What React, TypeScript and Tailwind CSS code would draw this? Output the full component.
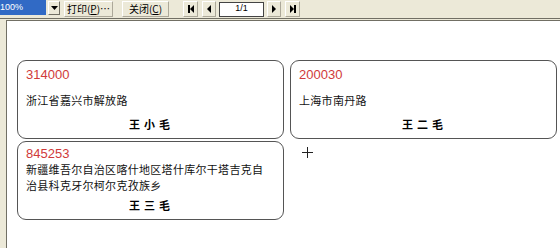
import React from "react";

const cjk = { fontFamily: '"Noto Sans CJK SC", "Liberation Sans", sans-serif' };

function TbButton({ children, w }: { children: React.ReactNode; w: string }) {
  return (
    <div
      className={`${w} h-[16px] flex items-center justify-center whitespace-nowrap bg-[#ece9d8] border border-t-white border-l-white border-r-[#aca899] border-b-[#aca899] text-[10px] leading-[14px] text-black`}
      style={cjk}
    >
      {children}
    </div>
  );
}

function NavBtn({ children, w = "w-[15px]" }: { children: React.ReactNode; w?: string }) {
  return (
    <div className={`${w} h-[16px] flex items-center justify-center bg-[#ece9d8] border border-t-white border-l-white border-r-[#aca899] border-b-[#aca899]`}>
      {children}
    </div>
  );
}

function Card({ code, lines, name }: { code: string; lines: string[]; name: string }) {
  const multi = lines.length > 1;
  return (
    <div className="w-[267px] h-[79px] border border-[#555] rounded-[9px] flex flex-col pl-[8px] pr-[6px]">
      <div
        className={`text-[13px] leading-[15px] text-[#d03a3a] ${multi ? "mt-[4px]" : "mt-[6px]"}`}
        style={{ fontFamily: '"Liberation Sans", sans-serif' }}
      >
        {code}
      </div>
      <div className={`flex-1 flex flex-col ${multi ? "justify-start" : "justify-center"}`}>
        {lines.map((l, i) => (
          <div key={i} className="text-[11px] leading-[16px] tracking-[0.3px] text-[#111]" style={cjk}>
            {l}
          </div>
        ))}
      </div>
      <div className="text-center text-[11px] leading-[14px] tracking-[4px] font-semibold text-black mb-[7px]" style={cjk}>
        {name}
      </div>
    </div>
  );
}

export default function App() {
  return (
    <div className="w-[560px] h-[248px] bg-[#ece9d8] flex flex-col overflow-hidden">
      <div className="h-[19px] flex items-start border-b border-[#716f64]">
        <div className="flex h-[16px]">
          <div className="w-[46px] h-[15px] bg-[#316ac5] text-white text-[9px] leading-[15px]" style={{ fontFamily: '"Liberation Sans", sans-serif' }}>
            100%
          </div>
          <div className="w-[2px]" />
          <div className="w-[12px] h-[14px] mt-[1px] bg-[#ece9d8] border border-t-white border-l-white border-r-[#716f64] border-b-[#716f64] flex items-center justify-center">
            <svg width="7" height="4" viewBox="0 0 7 4"><path d="M0 0h7L3.5 4z" fill="#000" /></svg>
          </div>
        </div>
        <div className="ml-[4px] mt-[1px]">
          <TbButton w="w-[49px]">打印(<u>P</u>)…</TbButton>
        </div>
        <div className="ml-[9px] mt-[1px]">
          <TbButton w="w-[47px]">关闭(<u>C</u>)</TbButton>
        </div>
        <div className="ml-[14px] mt-[1px] flex items-center">
          <NavBtn>
            <svg width="8" height="8" viewBox="0 0 8 8"><rect x="1" y="0" width="2" height="8" fill="#000" /><path d="M7 0v8L3 4z" fill="#000" /></svg>
          </NavBtn>
          <div className="w-[4px]" />
          <NavBtn w="w-[14px]">
            <svg width="8" height="8" viewBox="0 0 8 8"><path d="M6 0v8L2 4z" fill="#000" /></svg>
          </NavBtn>
          <div className="w-[3px]" />
          <div className="w-[45px] h-[15px] bg-white border border-[#444] flex items-center justify-center text-[9px]" style={{ fontFamily: '"Liberation Sans", sans-serif' }}>
            1/1
          </div>
          <div className="w-[3px]" />
          <NavBtn w="w-[14px]">
            <svg width="8" height="8" viewBox="0 0 8 8"><path d="M2 0v8L6 4z" fill="#000" /></svg>
          </NavBtn>
          <div className="w-[4px]" />
          <NavBtn>
            <svg width="8" height="8" viewBox="0 0 8 8"><path d="M1 0v8L5 4z" fill="#000" /><rect x="5" y="0" width="2" height="8" fill="#000" /></svg>
          </NavBtn>
        </div>
      </div>
      <div className="flex-1 flex pt-[1px]">
        <div className="w-[6px]" />
        <div className="flex-1 bg-white border-l border-t border-[#716f64] pl-[10px] pt-[39px]">
          <div className="grid grid-cols-[267px_267px] gap-x-[6px] gap-y-[2px]">
            <Card code="314000" lines={["浙江省嘉兴市解放路"]} name="王小毛" />
            <Card code="200030" lines={["上海市南丹路"]} name="王二毛" />
            <Card
              code="845253"
              lines={["新疆维吾尔自治区喀什地区塔什库尔干塔吉克自", "治县科克牙尔柯尔克孜族乡"]}
              name="王三毛"
            />
            <div className="pl-[12px] pt-[6px]">
              <svg width="11" height="11" viewBox="0 0 11 11"><path d="M5.5 0v11M0 5.5h11" stroke="#222" strokeWidth="1" /></svg>
            </div>
          </div>
        </div>
      </div>
    </div>
  );
}
